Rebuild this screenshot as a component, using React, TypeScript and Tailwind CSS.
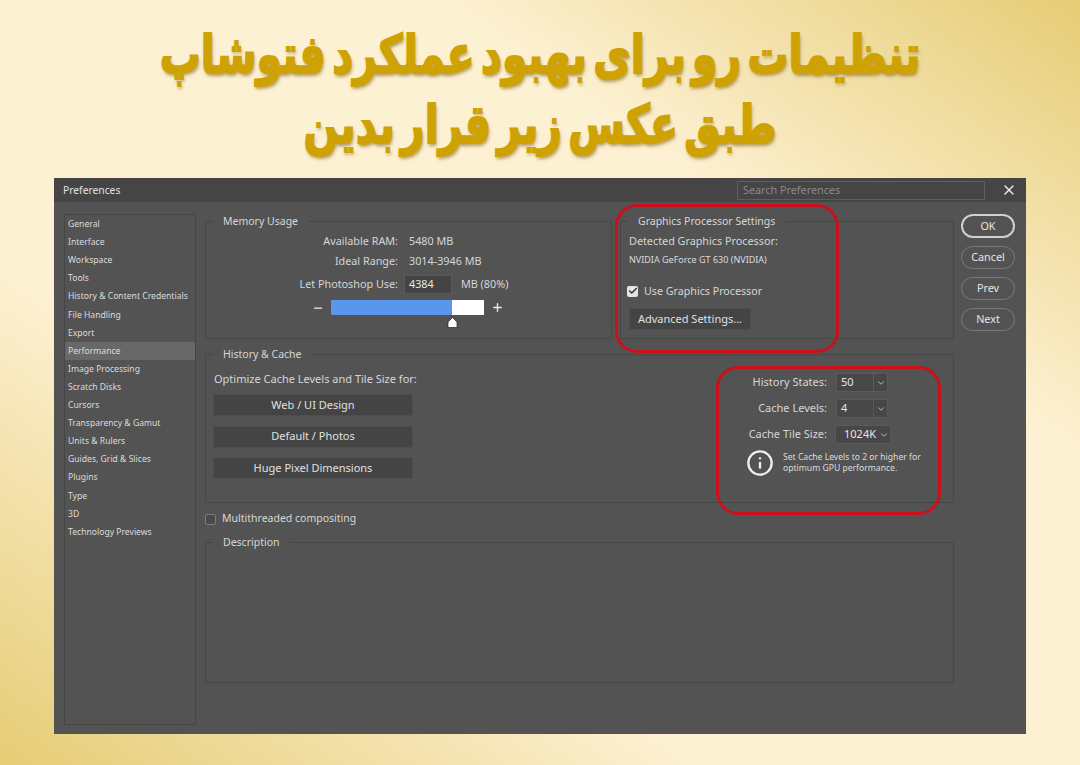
import { Check, ChevronDown, Info, Minus, Plus, X } from "lucide-react";

const navItems = [
  "General",
  "Interface",
  "Workspace",
  "Tools",
  "History & Content Credentials",
  "File Handling",
  "Export",
  "Performance",
  "Image Processing",
  "Scratch Disks",
  "Cursors",
  "Transparency & Gamut",
  "Units & Rulers",
  "Guides, Grid & Slices",
  "Plugins",
  "Type",
  "3D",
  "Technology Previews",
];

const Box = ({ title, className, children }: { title: string; className: string; children?: React.ReactNode }) => (
  <fieldset className={`min-w-0 border border-[#464646] rounded-[2px] p-0 ${className}`}>
    <legend className="ml-[7px] px-[10px] h-[14px] leading-[14px] text-[10.5px] text-[#d6d6d6]">{title}</legend>
    {children}
  </fieldset>
);

const Combo = ({ value, wide }: { value: string; wide?: boolean }) =>
  wide ? (
    <div className="w-[56px] h-[19px] bg-[#474747] border border-[#5a5a5a] rounded-[2px] flex items-center pl-2 text-[#e6e6e6]">
      <span className="flex-1">{value}</span>
      <ChevronDown size={10} className="mr-[1px] text-[#cfcfcf]" />
    </div>
  ) : (
    <div className="w-[52px] h-[19px] bg-[#474747] border border-[#5a5a5a] rounded-[2px] flex items-center text-[#e6e6e6]">
      <span className="flex-1 pl-[4px]">{value}</span>
      <div className="w-[14px] h-full border-l border-[#5a5a5a] flex items-center justify-center">
        <ChevronDown size={10} className="text-[#cfcfcf]" />
      </div>
    </div>
  );

const SideButton = ({ label, primary }: { label: string; primary?: boolean }) => (
  <button
    className={`w-[54px] rounded-full text-[10.8px] text-[#e6e6e6] ${
      primary ? "h-[24px] border-2 border-[#d0d0d0]" : "h-[23px] border border-[#7a7a7a]"
    }`}
  >
    {label}
  </button>
);

const CacheButton = ({ label }: { label: string }) => (
  <button className="w-[200px] h-[22px] bg-[#444444] border border-[#4e4e4e] rounded-[2px] text-[11px] text-[#e0e0e0]">
    {label}
  </button>
);

export default function App() {
  return (
    <div className="relative w-[1080px] h-[765px] overflow-hidden bg-[linear-gradient(to_top_right,#e6cc75_0%,#fdf1d3_33%,#fdf1d3_70%,#e6cc75_100%)] font-['Noto_Sans',sans-serif]">
      <div
        dir="rtl"
        className="h-[178px] pt-[20px] text-center font-['DejaVu_Sans',sans-serif] font-bold text-[41px] leading-[70px] [word-spacing:-8px] text-[#cfa204] [-webkit-text-stroke:1.5px_#cfa204] [text-shadow:1px_2px_3px_rgba(120,90,0,0.55)]"
      >
        <div className="scale-y-[1.3]">تنظیمات رو برای بهبود عملکرد فتوشاپ</div>
        <div className="scale-y-[1.3]">طبق عکس زیر قرار بدین</div>
      </div>

      <div className="ml-[54px] w-[972px] h-[556px] bg-[#535353] text-[10.8px] text-[#d6d6d6]">
        {/* title bar */}
        <div className="h-[24px] bg-[#454545] flex items-center pl-[9px] pr-[9px]">
          <span className="pt-[1px] text-[10.3px] text-[#e0e0e0]">Preferences</span>
          <div className="ml-auto w-[248px] h-[19px] border border-[#5f5f5f] flex items-center pl-[5px] text-[#8a8a8a]">
            Search Preferences
          </div>
          <X size={16} className="ml-[16px] text-[#eeeeee]" />
        </div>

        <div className="flex pt-[12px] pl-[10px]">
          {/* sidebar */}
          <div className="w-[132px] h-[511px] pt-[0.5px] border border-[#464646] text-[8.6px] text-[#dcdcdc]">
            {navItems.map((item) => (
              <div
                key={item}
                className={`h-[18.1px] flex items-center pl-[3px] whitespace-nowrap ${item === "Performance" ? "bg-[#686868]" : ""}`}
              >
                {item}
              </div>
            ))}
          </div>

          {/* main column */}
          <div className="w-[749px] ml-[9px]">
            <div className="flex gap-[8px]">
              <Box title="Memory Usage" className="w-[407px] h-[125px]">
                <div className="pt-[3px]">
                  <div className="h-[20px] flex items-center">
                    <span className="w-[192px] text-right">Available RAM:</span>
                    <span className="ml-[11px]">5480 MB</span>
                  </div>
                  <div className="h-[20px] flex items-center">
                    <span className="w-[192px] text-right">Ideal Range:</span>
                    <span className="ml-[11px]">3014-3946 MB</span>
                  </div>
                  <div className="h-[23px] mt-[2px] flex items-center">
                    <span className="w-[192px] text-right">Let Photoshop Use:</span>
                    <div className="ml-[6px] w-[48px] h-[19px] bg-[#444444] border border-[#5a5a5a] flex items-center pl-[4px] text-[#e6e6e6]">
                      4384
                    </div>
                    <span className="ml-[9px]">MB (80%)</span>
                  </div>
                  <div className="mt-[4px] h-[15px] flex items-center">
                    <Minus size={12} strokeWidth={2.5} className="ml-[106px] text-[#eeeeee]" />
                    <div className="relative ml-[7px] w-[153px] h-[15px] bg-white flex">
                      <div className="w-[121px] bg-[#5a96ee]" />
                      <svg className="absolute left-[115.5px] top-[17px]" width="11" height="11" viewBox="0 0 11 11">
                        <path d="M5.5 0.5 L10 5 V10.5 H1 V5 Z" fill="#ffffff" stroke="#222222" strokeWidth="0.7" />
                      </svg>
                    </div>
                    <Plus size={13} strokeWidth={2.5} className="ml-[7px] text-[#eeeeee]" />
                  </div>
                </div>
              </Box>

              <Box title="Graphics Processor Settings" className="w-[334px] h-[125px]">
                <div className="pl-[8px] pt-[3px]">
                  <div className="h-[20px] flex items-center">Detected Graphics Processor:</div>
                  <div className="h-[18px] flex items-center text-[9px] text-[#dcdcdc]">NVIDIA GeForce GT 630 (NVIDIA)</div>
                  <div className="mt-[14px] h-[16px] flex items-center -ml-[2px]">
                    <div className="w-[11px] h-[11px] bg-[#e4e4e4] rounded-[2px] flex items-center justify-center">
                      <Check size={10} strokeWidth={3.5} className="text-[#333333]" />
                    </div>
                    <span className="ml-[6px] text-[10.7px]">Use Graphics Processor</span>
                  </div>
                  <button className="mt-[9px] w-[122px] h-[22px] bg-[#444444] border border-[#4e4e4e] rounded-[2px] text-[11px] text-[#e0e0e0]">
                    Advanced Settings...
                  </button>
                </div>
              </Box>
            </div>

            <Box title="History & Cache" className="mt-[8px] h-[156px]">
              <div className="flex">
                <div className="w-[450px] pl-[7px] pt-[11px]">
                  <div className="h-[14px] leading-[14px] pl-[1px] text-[11px]">Optimize Cache Levels and Tile Size for:</div>
                  <div className="mt-[8px] flex flex-col gap-[9.5px]">
                    <CacheButton label="Web / UI Design" />
                    <CacheButton label="Default / Photos" />
                    <CacheButton label="Huge Pixel Dimensions" />
                  </div>
                </div>
                <div className="pt-[12px]">
                  <div className="flex flex-col gap-[7px] text-[11px]">
                    <div className="h-[19px] flex items-center">
                      <span className="w-[171px] text-right">History States:</span>
                      <div className="ml-[9px]"><Combo value="50" /></div>
                    </div>
                    <div className="h-[19px] flex items-center">
                      <span className="w-[171px] text-right">Cache Levels:</span>
                      <div className="ml-[9px]"><Combo value="4" /></div>
                    </div>
                    <div className="h-[19px] flex items-center">
                      <span className="w-[171px] text-right">Cache Tile Size:</span>
                      <div className="ml-[8px]"><Combo value="1024K" wide /></div>
                    </div>
                  </div>
                  <div className="mt-[5px] ml-[90px] flex items-center">
                    <Info size={28} strokeWidth={2} className="text-[#eeeeee]" />
                    <div className="ml-[9px] text-[8.6px] leading-[11px] text-[#dcdcdc]">
                      Set Cache Levels to 2 or higher for
                      <br />
                      optimum GPU performance.
                    </div>
                  </div>
                </div>
              </div>
            </Box>

            <div className="mt-[8px] h-[16px] flex items-center">
              <div className="w-[11px] h-[11px] bg-[#4a4a4a] border border-[#7c7c7c] rounded-[2px]" />
              <span className="ml-[6px] text-[10.5px]">Multithreaded compositing</span>
            </div>

            <Box title="Description" className="mt-[8px] h-[148px]" />
          </div>

          {/* action buttons */}
          <div className="ml-[7px] flex flex-col gap-[8px]">
            <SideButton label="OK" primary />
            <SideButton label="Cancel" />
            <SideButton label="Prev" />
            <SideButton label="Next" />
          </div>
        </div>
      </div>

      {/* red annotations */}
      <div className="absolute left-[615px] top-[204px] w-[224px] h-[149px] border-[3px] border-[#c9101b] rounded-[22px]" />
      <div className="absolute left-[716px] top-[366px] w-[225px] h-[149px] border-[3px] border-[#c9101b] rounded-[22px]" />
    </div>
  );
}
